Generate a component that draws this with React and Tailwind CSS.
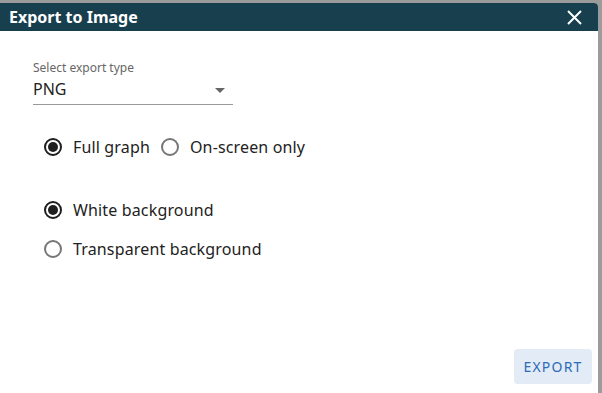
import React from "react";

function Radio({ checked, label }) {
  return (
    <label className="flex items-center gap-[10px]">
      <span className="relative flex h-[20px] w-[20px] items-center justify-center">
        <span
          className={
            "h-[18px] w-[18px] rounded-full border-2 " +
            (checked ? "border-[#1f1f1f]" : "border-[#767676]")
          }
        />
        {checked && (
          <span className="absolute h-[10px] w-[10px] rounded-full bg-[#1f1f1f]" />
        )}
      </span>
      <span className="text-[16px] leading-[20px] tracking-[0.15px] text-[#222]">{label}</span>
    </label>
  );
}

export default function App() {
  return (
    <div
      className="h-[393px] w-[602px] bg-[#9b9b9b] pt-[3px]"
      style={{ fontFamily: '"Noto Sans", "Open Sans", sans-serif' }}
    >
      <div className="flex h-[390px] w-[598px] flex-col overflow-hidden rounded-tr-[4px] bg-white">
        <div className="flex h-[28px] items-center justify-between bg-[#173f4e] pl-[9px] pr-[16px]">
          <span className="text-[16px] font-bold text-white">Export to Image</span>
          <svg width="15" height="15" viewBox="0 0 15 15">
            <path d="M1 1L14 14M14 1L1 14" stroke="white" strokeWidth="2" />
          </svg>
        </div>
        <div className="relative flex-1 px-[33px] pt-[29px]">
          <div className="text-[12px] leading-[16px] text-[#666]">Select export type</div>
          <div className="flex h-[29px] w-[200px] items-end justify-between border-b border-[#999] pb-[4px]">
            <span className="text-[16px] leading-[22px] text-[#222]">PNG</span>
            <svg width="10" height="5" viewBox="0 0 10 5" className="mb-[7px] mr-[8px]">
              <path d="M0 0L10 0L5 5Z" fill="#666" />
            </svg>
          </div>
          <div className="mt-[32px] flex items-center gap-[10px] pl-[10px]">
            <Radio checked label="Full graph" />
            <Radio label="On-screen only" />
          </div>
          <div className="mt-[43px] flex flex-col gap-[19px] pl-[10px]">
            <Radio checked label="White background" />
            <Radio label="Transparent background" />
          </div>
          <button className="absolute bottom-[9px] right-[6px] flex h-[35px] w-[78px] items-center justify-center rounded-[4px] bg-[#e2ebf6] text-[14px] tracking-[1.2px] text-[#2b6cb8]">
            EXPORT
          </button>
        </div>
      </div>
    </div>
  );
}
